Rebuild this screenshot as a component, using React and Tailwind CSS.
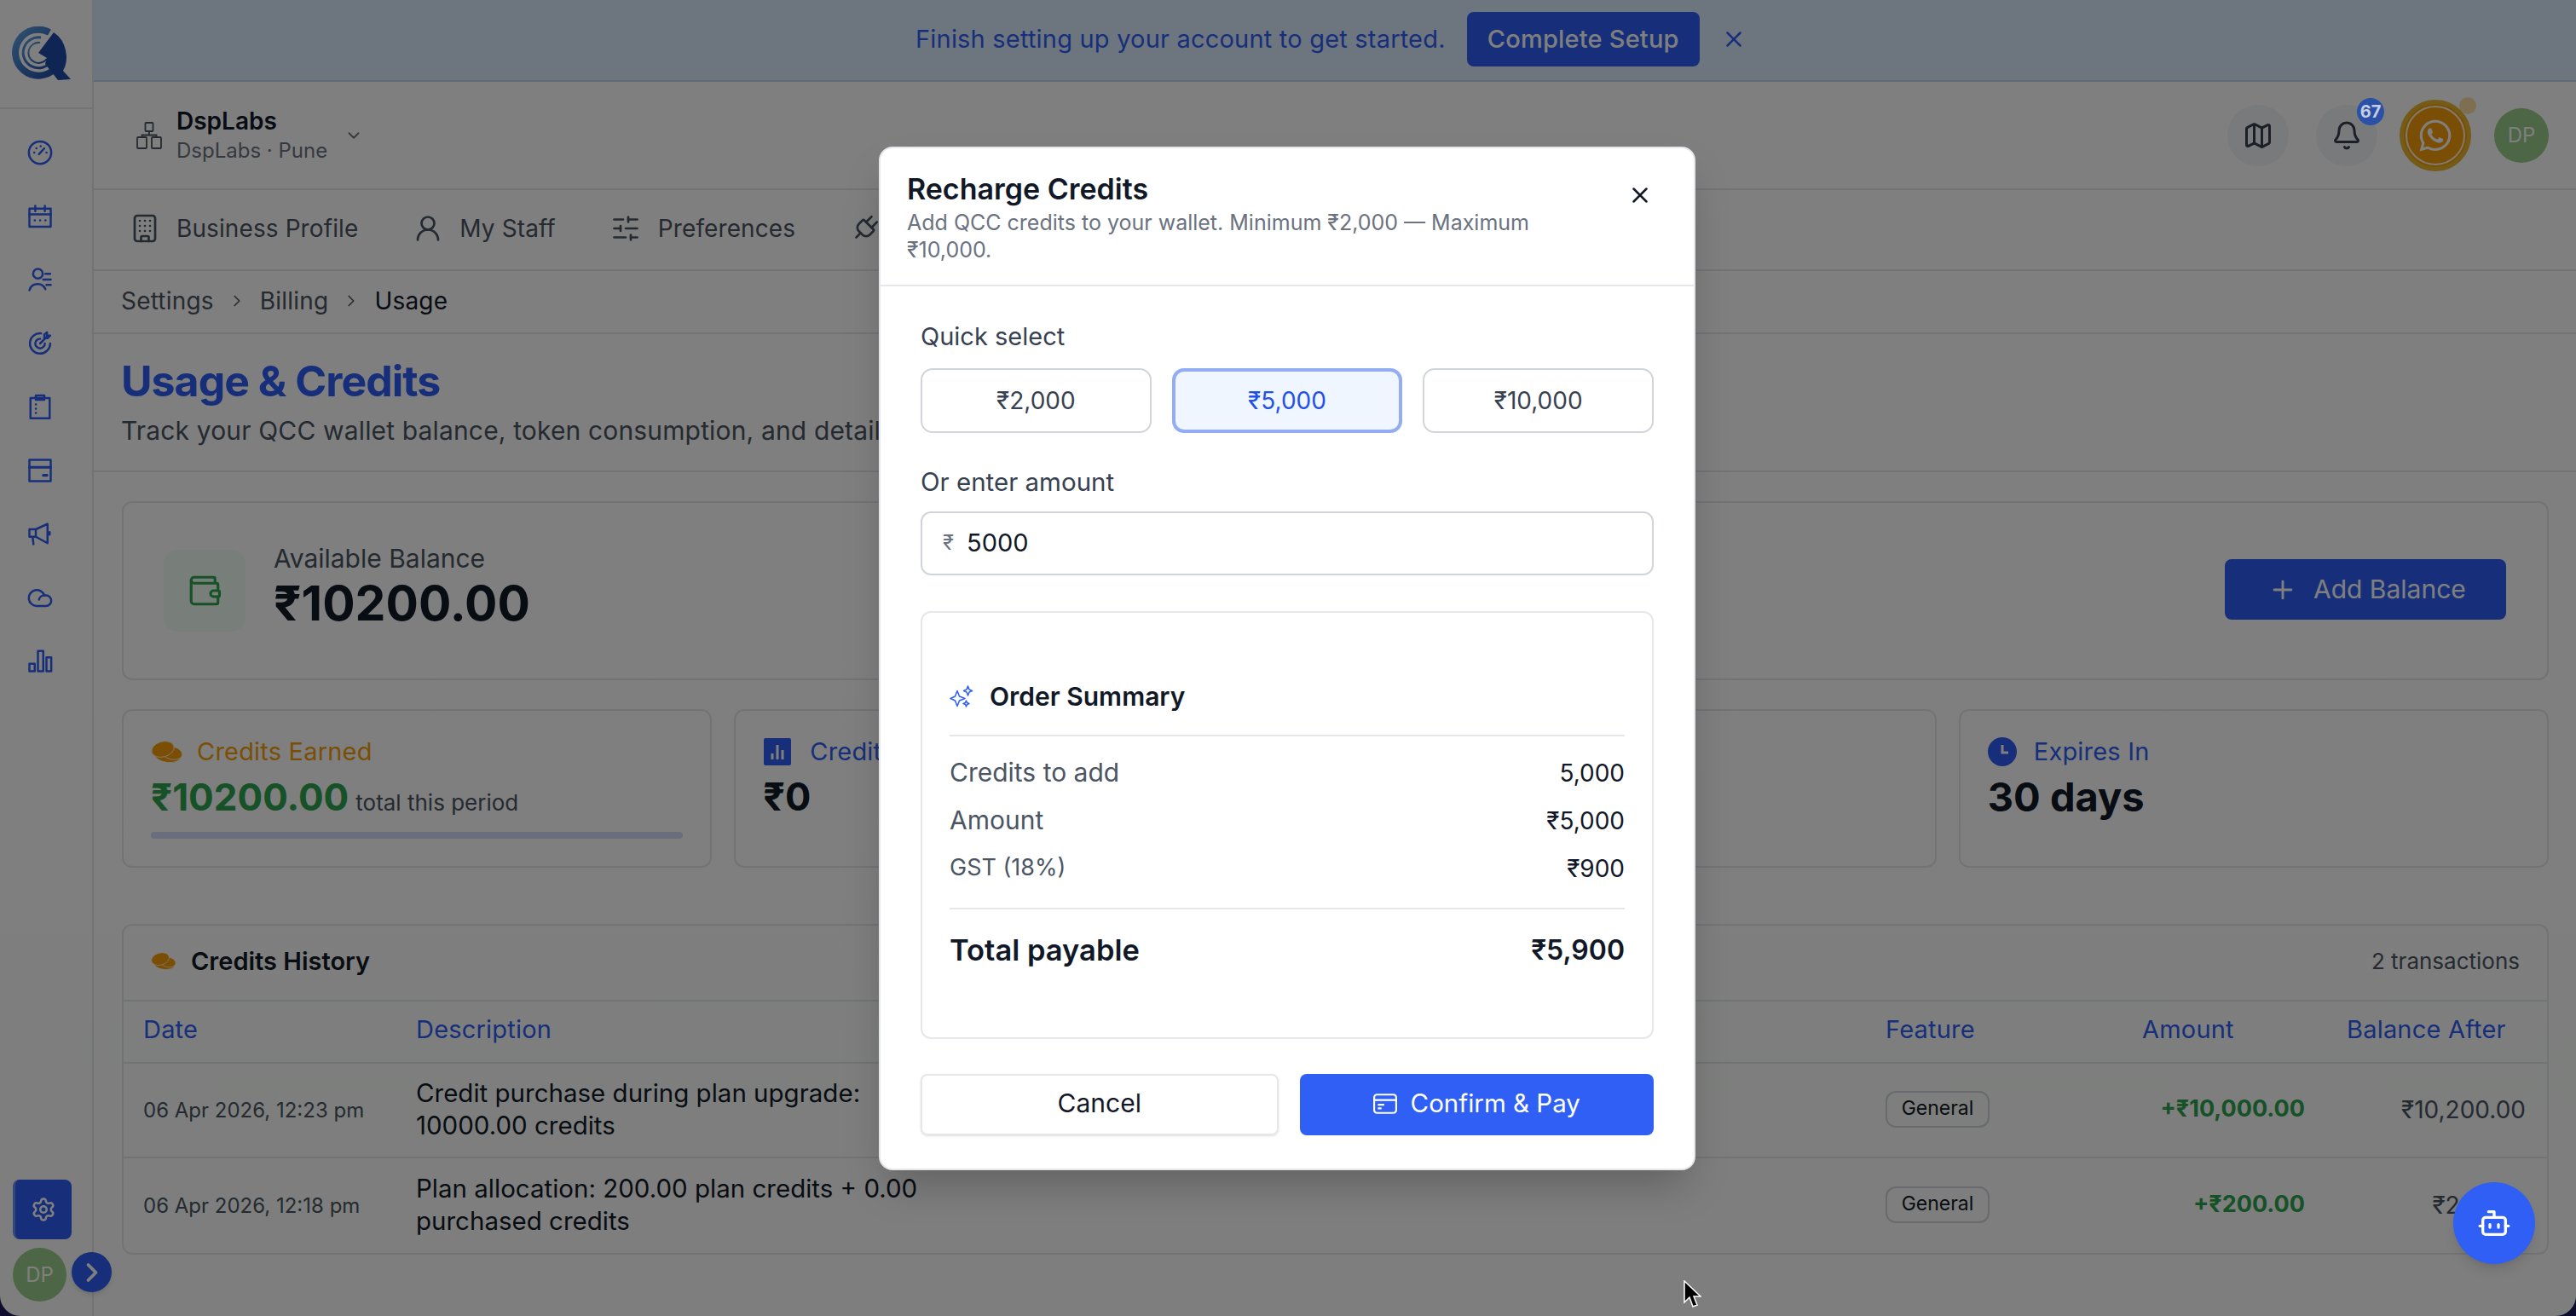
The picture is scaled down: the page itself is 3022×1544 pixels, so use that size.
import React from "react";
import {
  Bell,
  Bot,
  Building,
  ChevronDown,
  ChevronRight,
  Map as MapIcon,
  Plug,
  Plus,
  Settings,
  SlidersHorizontal,
  UserRound,
  Wallet,
  X,
} from "lucide-react";
import { FaWhatsapp } from "react-icons/fa";

function Logo() {
  return (
    <svg viewBox="0 0 70 64" className="w-[70px] h-[64px]">
      <defs>
        <linearGradient id="ring" x1="0" y1="0" x2="1" y2="1">
          <stop offset="0" stopColor="#5f9fe0" />
          <stop offset="1" stopColor="#1f4ea8" />
        </linearGradient>
      </defs>
      <path d="M44 7A27 27 0 1 0 50 50" fill="none" stroke="url(#ring)" strokeWidth="8" />
      <path d="M34 13A18 18 0 1 0 46 41" fill="none" stroke="url(#ring)" strokeWidth="3" />
      <path d="M33 19A12 12 0 1 0 41 38" fill="none" stroke="url(#ring)" strokeWidth="2" />
      <path d="M49 7L31 31L41 37L39 44L54 63L69 62L60 52Q66 42 63 28Q60 14 49 7Z" fill="#1f4aa6" />
    </svg>
  );
}

function NavIcon({ children }) {
  return (
    <svg
      viewBox="0 0 24 24"
      fill="none"
      stroke="#2f5ff5"
      strokeWidth="2"
      strokeLinecap="round"
      strokeLinejoin="round"
      className="w-[30px] h-[30px]"
    >
      {children}
    </svg>
  );
}

const navIcons = [
  <>
    <circle cx="12" cy="12" r="10.5" />
    <path d="M11 13.5L16 8M6.5 12h.1M8.5 8h.1M12.5 6h.1M18 12h.1" />
  </>,
  <>
    <rect x="2" y="4.5" width="20" height="17" />
    <path d="M2 10h20M7.5 2v5M16.5 2v5M7 15.5h.1M12 15.5h.1M17 15.5h.1" />
  </>,
  <>
    <circle cx="10" cy="6.5" r="4.5" />
    <path d="M2 22a8 8 0 0 1 15-1M17 6.5h4.5M15 12h7M18 17h4" />
  </>,
  <>
    <path d="M21.5 12A9.5 9.5 0 1 1 13 2.5" />
    <path d="M16.5 12A4.5 4.5 0 1 1 12 7.5" />
    <path d="M12 12l6-6M16 6V3.5L18.5 1.5V4.5H21.5L19 7H16Z" />
  </>,
  <>
    <rect x="3" y="4" width="18" height="19" />
    <rect x="8" y="1.5" width="8" height="4" />
    <path d="M8 10h.1M8 14h.1M8 18h.1" />
  </>,
  <>
    <rect x="2" y="2" width="20" height="20" />
    <path d="M2 9h20M15 16.5h3.5" strokeWidth="2.5" />
  </>,
  <>
    <path d="M2 8h6v7H2zM8 8l11-5v18l-11-6M21 10.5v2.5M5 15l.8 7" />
  </>,
  <>
    <path d="M17.5 20H9a7.5 7.5 0 1 1 7-10h1.5a5 5 0 1 1 0 10Z" />
    <path d="M11 14a5 5 0 0 1 5-4" />
  </>,
  <>
    <rect x="2" y="15" width="5" height="7" />
    <rect x="10" y="3" width="5" height="19" />
    <rect x="18" y="9" width="4.5" height="13" />
  </>,
];

function Coins({ className }) {
  return (
    <svg viewBox="0 0 38 26" className={className}>
      <ellipse cx="20" cy="18" rx="15" ry="7.5" transform="rotate(6 20 18)" fill="#f59e0b" stroke="#ffffff" strokeWidth="0.8" />
      <ellipse cx="25" cy="14.5" rx="12" ry="7.5" transform="rotate(12 25 14.5)" fill="#f59e0b" stroke="#ffffff" strokeWidth="0.8" />
      <ellipse cx="14" cy="10" rx="13.5" ry="9" transform="rotate(-16 14 10)" fill="#f59e0b" stroke="#ffffff" strokeWidth="0.8" />
    </svg>
  );
}

function Sidebar() {
  return (
    <aside className="w-[110px] shrink-0 border-r-2 border-[#e5e7eb] flex flex-col">
      <div className="h-[128px] shrink-0 border-b-2 border-[#e5e7eb] flex items-center pl-[14px]">
        <Logo />
      </div>
      <nav className="flex flex-col items-center gap-[44.5px] pt-[36px] pr-[14px]">
        {navIcons.map((icon, i) => (
          <NavIcon key={i}>{icon}</NavIcon>
        ))}
      </nav>
      <div className="mt-auto pl-[15px] pb-[17px] relative">
        <div className="w-[69px] h-[70px] rounded-[8px] bg-[#2f5ff5] border-l-[3px] border-[#6a8cf8] flex items-center justify-center">
          <Settings size={30} color="#ffffff" strokeWidth={2} />
        </div>
        <div className="mt-[10px] flex items-center">
          <div className="w-[63px] h-[63px] rounded-full bg-[#9acc8a] flex items-center justify-center text-[24px] text-white">
            DP
          </div>
          <button className="absolute left-[84px] bottom-[28px] z-10 w-[47px] h-[47px] rounded-full bg-[#2f5ff5] shadow-md flex items-center justify-center">
            <ChevronRight size={36} color="#ffffff" strokeWidth={2.5} />
          </button>
        </div>
      </div>
    </aside>
  );
}

function Banner() {
  return (
    <div className="h-[96px] shrink-0 bg-[#dbeafe] border-b-2 border-[#bfd4f5] flex items-center pl-[964px] pb-[2px]">
      <span className="text-[29px] text-[#2f5ff5] tracking-[0.2px]">
        Finish setting up your account to get started.
      </span>
      <button className="ml-[25px] w-[273px] h-[64px] rounded-[8px] bg-[#2f5ff5] text-white text-[29px] tracking-[0.2px] font-medium">
        Complete Setup
      </button>
      <X size={30} color="#2f5ff5" strokeWidth={2} className="ml-[25px]" />
    </div>
  );
}

function TopBar() {
  return (
    <div className="h-[127px] shrink-0 border-b-2 border-[#e5e7eb] flex items-center pl-[49px] pr-[32px]">
      <svg viewBox="0 0 32 32" fill="none" stroke="#4b5563" strokeWidth="1.8" className="w-[32px] h-[32px]">
        <rect x="11.5" y="1" width="9" height="10" rx="1" />
        <path d="M16 11v4.5M7.5 18v-2.5h17V18" />
        <rect x="2" y="18" width="11" height="13" rx="1" />
        <rect x="19" y="18" width="11" height="13" rx="1" />
      </svg>
      <div className="ml-[16px]">
        <div className="text-[28px] leading-[36px] font-semibold text-[#111827]">DspLabs</div>
        <div className="text-[24px] leading-[34px] text-[#6b7280]">DspLabs · Pune</div>
      </div>
      <ChevronDown size={22} color="#6b7280" strokeWidth={2} className="ml-[20px]" />
      <div className="ml-auto flex items-center">
        <div className="w-[72px] h-[72px] rounded-full bg-[#f3f4f6] flex items-center justify-center">
          <MapIcon size={36} color="#374151" strokeWidth={2} />
        </div>
        <div className="relative ml-[32px] w-[72px] h-[72px] rounded-full bg-[#f3f4f6] flex items-center justify-center">
          <Bell size={36} color="#374151" strokeWidth={2} />
          <span className="absolute top-[-8px] right-[-8px] z-50 w-[32px] h-[32px] rounded-full bg-[#2a50a8] text-[#c5cde0] text-[20px] font-bold flex items-center justify-center">
            67
          </span>
        </div>
        <div className="relative ml-[26px] w-[84px] h-[84px] rounded-full bg-[#f59e0b] border-[5px] border-[#e8b62e] flex items-center justify-center">
          <div className="w-[70px] h-[70px] rounded-full border-[2px] border-[#fff5d8] flex items-center justify-center">
            <FaWhatsapp size={42} color="#ffffff" />
          </div>
          <span className="absolute top-[-8px] right-[-11px] w-[20px] h-[20px] rounded-full bg-[#fcd27f] opacity-70" />
        </div>
        <div className="ml-[27px] w-[64px] h-[64px] rounded-full bg-[#9acc8a] text-white text-[24px] flex items-center justify-center">
          DP
        </div>
      </div>
    </div>
  );
}

function Tabs() {
  const tabs = [
    { label: "Business Profile", icon: Building, gap: "gap-[19px]" },
    { label: "My Staff", icon: UserRound, gap: "gap-[19px]" },
    { label: "Preferences", icon: SlidersHorizontal, gap: "gap-[20px]" },
  ];
  return (
    <div className="h-[95px] shrink-0 border-b-2 border-[#e5e7eb] flex items-center pl-[42px] pb-[4px] gap-[64px]">
      {tabs.map((t) => (
        <div key={t.label} className={`flex items-center ${t.gap}`}>
          <t.icon size={36} color="#4b5563" strokeWidth={1.8} />
          <span className="text-[28px] tracking-[0.1px] text-[#4b5563]">{t.label}</span>
        </div>
      ))}
      <Plug size={36} color="#4b5563" strokeWidth={1.8} className="rotate-45" />
    </div>
  );
}

function Breadcrumb() {
  return (
    <div className="h-[74px] shrink-0 border-b-2 border-[#e5e7eb] flex items-center pl-[32px] pb-[2px] text-[28px] tracking-[0.2px] text-[#4b5563]">
      <span>Settings</span>
      <ChevronRight size={22} strokeWidth={1.8} className="mx-[16px]" />
      <span>Billing</span>
      <ChevronRight size={22} strokeWidth={1.8} className="mx-[16px]" />
      <span className="text-[#111827]">Usage</span>
    </div>
  );
}

function BalanceCard() {
  return (
    <div className="h-[210px] rounded-[12px] border-2 border-[#e5e7eb] flex items-center pl-[47px] pr-[48px]">
      <div className="w-[96px] h-[96px] rounded-[16px] bg-[#f0fdf4] flex items-center justify-center">
        <Wallet size={42} color="#2fa34e" strokeWidth={1.8} />
      </div>
      <div className="ml-[33px] mb-[2px]">
        <div className="text-[30px] leading-[32px] text-[#4b5563]">Available Balance</div>
        <div className="text-[57px] leading-[74px] font-bold text-[#111827]">₹10200.00</div>
      </div>
      <button className="ml-auto mb-[3px] w-[330px] h-[71px] rounded-[8px] bg-[#2f5ff5] text-white text-[30px] flex items-center pl-[51px] gap-[19px]">
        <Plus size={34} strokeWidth={2} />
        Add Balance
      </button>
    </div>
  );
}

function StatCard({ icon, label, labelColor, children }) {
  return (
    <div className="h-[186px] rounded-[12px] border-2 border-[#e5e7eb] pt-[31px] px-[32px]">
      <div className="flex items-center gap-[16px] h-[34px]">
        {icon}
        <span className={`text-[29px] tracking-[0.2px] ${labelColor}`}>{label}</span>
      </div>
      {children}
    </div>
  );
}

function Stats() {
  return (
    <div className="mt-[34px] grid grid-cols-4 gap-[26px]">
      <StatCard
        icon={<Coins className="w-[38px] h-[26px]" />}
        label="Credits Earned"
        labelColor="text-[#f59e0b]"
      >
        <div className="mt-[3px] flex items-baseline gap-[8px]">
          <span className="text-[44px] leading-[66px] font-bold text-[#2fa34e]">₹10200.00</span>
          <span className="text-[26px] text-[#4b5563]">total this period</span>
        </div>
        <div className="mt-[8px] h-[8px] rounded-full bg-[#d3dbf8]" />
      </StatCard>
      <StatCard
        icon={
          <svg viewBox="0 0 32 32" className="w-[34px] h-[32px] mr-[5px]">
            <rect width="32" height="32" rx="2" fill="#2f5ff5" />
            <path d="M10 25v-7M16 25V8M22 25V14" stroke="#ffffff" strokeWidth="3" />
          </svg>
        }
        label="Credits Used"
        labelColor="text-[#2f5ff5]"
      >
        <div className="mt-[3px] text-[45px] leading-[66px] font-bold text-[#111827]">₹0</div>
      </StatCard>
      <StatCard icon={null} label="" labelColor="" />
      <StatCard
        icon={
          <svg viewBox="0 0 34 34" className="w-[34px] h-[34px] mr-[4px]">
            <circle cx="17" cy="17" r="17" fill="#2f5ff5" />
            <path d="M17 9v9h7" fill="none" stroke="#ffffff" strokeWidth="3" />
          </svg>
        }
        label="Expires In"
        labelColor="text-[#2f5ff5]"
      >
        <div className="mt-[3px] text-[47px] leading-[66px] font-bold text-[#111827]">30 days</div>
      </StatCard>
    </div>
  );
}

const rowGrid = "grid grid-cols-[343px_1724px_278px_238px_260px] items-center";

function HistoryRow({ date, lines, amount, balance }) {
  return (
    <div className={`${rowGrid} h-[111px] border-b-2 border-[#e5e7eb] last:border-b-0`}>
      <div className="pl-[23px] text-[24px] text-[#4b5563]">{date}</div>
      <div className="pb-[3px] text-[29.5px] leading-[38px] text-[#111827]">
        {lines[0]}
        <br />
        {lines[1]}
      </div>
      <div className="pb-[2px]">
        <span className="inline-block h-[43px] w-[122px] rounded-[12px] border-2 border-[#d1d5db] text-[23px] leading-[37px] text-center text-[#111827]">
          General
        </span>
      </div>
      <div className="pb-[2px] pr-[24px] text-right text-[27px] font-bold text-[#2fa34e]">{amount}</div>
      <div className="pb-[2px] pr-[25px] text-right text-[28px] text-[#4b5563]">{balance}</div>
    </div>
  );
}

function History() {
  return (
    <div className="mt-[66px] rounded-[12px] border-2 border-[#e5e7eb]">
      <div className="h-[89px] border-b-2 border-[#e5e7eb] flex items-center pl-[32px] pr-[32px] pb-[4px]">
        <Coins className="w-[30px] h-[21px]" />
        <span className="ml-[17px] text-[29px] font-semibold text-[#111827]">Credits History</span>
        <span className="ml-auto text-[26px] text-[#4b5563]">2 transactions</span>
      </div>
      <div className={`${rowGrid} h-[73px] pb-[5px] border-b-2 border-[#e5e7eb] text-[29px] tracking-[0.2px] text-[#2f5ff5]`}>
        <div className="pl-[23px]">Date</div>
        <div>Description</div>
        <div>Feature</div>
        <div className="pl-[23px]">Amount</div>
        <div className="pl-[25px]">Balance After</div>
      </div>
      <HistoryRow
        date="06 Apr 2026, 12:23 pm"
        lines={["Credit purchase during plan upgrade:", "10000.00 credits"]}
        amount="+₹10,000.00"
        balance="₹10,200.00"
      />
      <HistoryRow
        date="06 Apr 2026, 12:18 pm"
        lines={["Plan allocation: 200.00 plan credits + 0.00", "purchased credits"]}
        amount="+₹200.00"
        balance="₹200.00"
      />
    </div>
  );
}

function SummaryRow({ label, value, labelSize = "text-[30px]" }) {
  return (
    <div className="h-[56px] flex items-center justify-between text-[28px]">
      <span className={`text-[#4b5563] ${labelSize}`}>{label}</span>
      <span className="text-[#111827]">{value}</span>
    </div>
  );
}

function Modal() {
  return (
    <div className="w-[958px] h-[1201px] mr-[2px] rounded-[16px] border-2 border-[#e5e7eb] bg-white shadow-2xl">
      <div className="relative h-[162px] border-b-2 border-[#e5e7eb] pl-[31px] pt-[24px]">
        <div className="text-[34px] leading-[47px] font-semibold text-[#111827]">Recharge Credits</div>
        <div className="text-[25px] leading-[32px] text-[#6b7280]">
          Add QCC credits to your wallet. Minimum ₹2,000 — Maximum
          <br />
          ₹10,000.
        </div>
        <X size={30} color="#111827" strokeWidth={2} className="absolute top-[40px] right-[48px]" />
      </div>
      <div className="pl-[47px] pr-[47px] pt-[40px]">
        <div className="text-[29px] leading-[38px] text-[#374151]">Quick select</div>
        <div className="mt-[18px] grid grid-cols-3 gap-[24px]">
          <button className="h-[76px] rounded-[14px] border-2 border-[#d1d5db] text-[28px] text-[#374151]">₹2,000</button>
          <button className="h-[76px] rounded-[14px] border-[4px] border-[#93acf3] bg-[#eff6ff] text-[28px] text-[#2350e8]">₹5,000</button>
          <button className="h-[76px] rounded-[14px] border-2 border-[#d1d5db] text-[28px] text-[#374151]">₹10,000</button>
        </div>
        <div className="mt-[38px] text-[29.5px] leading-[38px] text-[#374151]">Or enter amount</div>
        <div className="mt-[16px] h-[75px] rounded-[12px] border-2 border-[#d1d5db] flex items-center pl-[24px] text-[#111827]">
          <span className="text-[24px] text-[#6b7280]">₹</span>
          <span className="ml-[15px] text-[29px]">5000</span>
        </div>
        <div className="mt-[42px] h-[502px] rounded-[12px] border-2 border-[#e5e7eb] px-[32px] pt-[72px]">
          <div className="h-[54px] flex items-center gap-[19px]">
            <svg viewBox="0 0 28 28" fill="none" stroke="#2f5ff5" strokeWidth="1.5" strokeLinejoin="round" className="w-[28px] h-[28px]">
              <path d="M9 6.5l2.5 6.5 6.5 2.5-6.5 2.5L9 24.5 6.5 18 1 15.5 6.5 13Z" />
              <path d="M21.5 1l1.5 4 3.5 1.5L23 8l-1.500 4L20 8l-3.500-1.500L20 5Z" />
              <path d="M19.5 18l1 2.5 2.5 1-2.500 1-1 2.500-1-2.500-2.500-1 2.500-1Z" />
            </svg>
            <span className="text-[30px] font-semibold text-[#111827]">Order Summary</span>
          </div>
          <div className="mt-[17px] mb-[15px] h-[2px] bg-[#e5e7eb]" />
          <SummaryRow label="Credits to add" value="5,000" />
          <SummaryRow label="Amount" value="₹5,000" />
          <SummaryRow label="GST (18%)" value="₹900" labelSize="text-[27px]" />
          <div className="mt-[18px] h-[2px] bg-[#e5e7eb]" />
          <div className="mt-[27px] flex items-center justify-between leading-[42px] font-semibold text-[#111827]">
            <span className="text-[34.5px]">Total payable</span>
            <span className="text-[32px]">₹5,900</span>
          </div>
        </div>
        <div className="mt-[41px] flex gap-[25px]">
          <button className="flex-1 h-[72px] pb-[2px] rounded-[8px] border-2 border-[#e5e7eb] shadow-sm text-[30px] text-[#111827]">Cancel</button>
          <button className="flex-1 h-[72px] pb-[2px] rounded-[8px] bg-[#2f5ff5] text-white text-[29.5px] flex items-center justify-center gap-[16px]">
            <svg viewBox="0 0 26 26" fill="none" stroke="#ffffff" strokeWidth="2" className="w-[28px] h-[28px]">
              <rect x="1" y="3" width="24" height="20" rx="3" />
              <path d="M1 9h24M5 14h7M5 18h4" />
            </svg>
            Confirm &amp; Pay
          </button>
        </div>
      </div>
    </div>
  );
}

export default function App() {
  return (
    <div className="relative w-full h-[1544px] overflow-hidden bg-[#1e1a5e] font-['Inter',sans-serif]">
      <div className="flex h-full rounded-b-[24px] overflow-hidden bg-linear-to-b from-white to-[#fafdfa]">
        <Sidebar />
        <main className="flex-1 min-w-0 flex flex-col">
          <Banner />
          <TopBar />
          <Tabs />
          <Breadcrumb />
          <div className="h-[162px] shrink-0 border-b-2 border-[#e5e7eb] pl-[32px] pt-[23px]">
            <h1 className="text-[50px] leading-[64px] font-bold tracking-[-1px] text-[#2f5ff5]">Usage &amp; Credits</h1>
            <p className="mt-[7px] text-[30px] tracking-[0.15px] leading-[38px] text-[#4b5563] whitespace-nowrap">
              Track your QCC wallet balance, token consumption, and detailed transaction history.
            </p>
          </div>
          <div className="pt-[34px] pl-[33px] pr-[32px]">
            <BalanceCard />
            <Stats />
            <History />
          </div>
        </main>
      </div>
      <div className="absolute inset-0 z-40 flex items-center justify-center bg-black/50">
        <Modal />
      </div>
      <button className="absolute left-[2878px] top-[1387px] z-50 w-[96px] h-[96px] rounded-full bg-[#2f5ff5] shadow-lg flex items-center justify-center">
        <Bot size={40} color="#ffffff" strokeWidth={2} />
      </button>
      <svg viewBox="0 0 22 33" className="absolute left-[1974px] top-[1502px] z-50 w-[22px] h-[33px]">
        <path d="M2 1V26L8 20L12 31L17 29L13 19H21Z" fill="#000000" stroke="#ffffff" strokeWidth="1.5" />
      </svg>
    </div>
  );
}
